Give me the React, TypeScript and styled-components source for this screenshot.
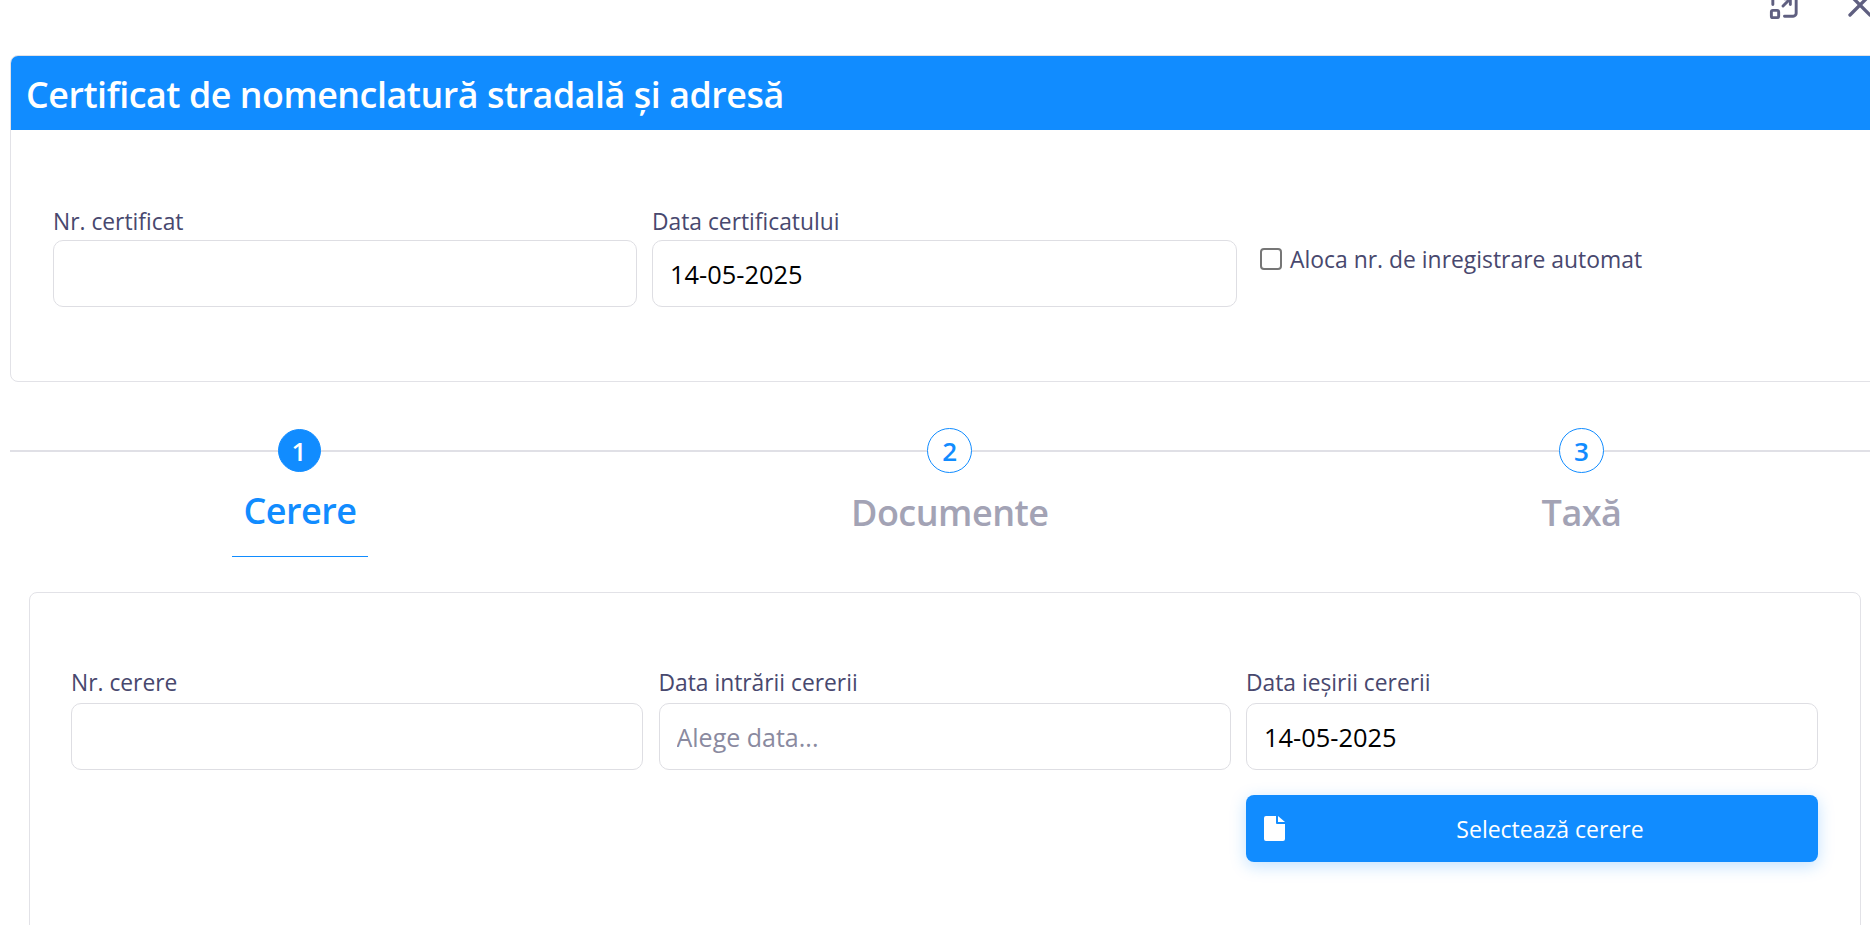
import { createGlobalStyle, styled } from "styled-components";
import { TbWindowMaximize, TbX } from "react-icons/tb";

const GlobalStyle = createGlobalStyle`
  html, body {
    margin: 0;
    padding: 0;
    background: #fff;
    overflow: hidden;
    font-family: "Open Sans", "Noto Sans", sans-serif;
  }
  * { box-sizing: border-box; }
`;

const Page = styled.div`
  width: 1870px;
  height: 925px;
  overflow: hidden;
`;

const Toolbar = styled.div`
  height: 9px;
  margin-bottom: 46px;
  display: flex;
  align-items: center;
  justify-content: flex-end;
  gap: 38px;
  color: #5f5f80;
`;

const CloseIcon = styled(TbX)`
  margin-right: -10px;
`;

const TopCard = styled.section`
  width: 1880px;
  margin-left: 10px;
  border: 1px solid #e2e2e7;
  border-radius: 8px;
  overflow: hidden;
`;

const Header = styled.header`
  height: 75px;
  margin: -1px 0 0 -1px;
  padding: 3px 0 0 16px;
  display: flex;
  align-items: center;
  background: #118cff;
`;

const Title = styled.h1`
  margin: 0;
  color: #fff;
  font-size: 35.8px;
  font-weight: 600;
  letter-spacing: -0.45px;
`;

const Field = styled.div`
  display: flex;
  flex-direction: column;
`;

const Label = styled.label`
  height: 35px;
  line-height: 30px;
  color: #48486e;
  font-size: 22.8px;
`;

const TopBody = styled.div`
  padding: 75px 0 74px 42px;
  display: grid;
  grid-template-columns: 584px 585px auto;
  column-gap: 15px;
  align-items: start;

  ${Label} {
    line-height: 33px;
  }
`;

const TextInput = styled.input`
  width: 100%;
  height: 67px;
  padding: 0 17px;
  border: 1px solid #dedee3;
  border-radius: 10px;
  outline: none;
  background: #fff;
  color: #000;
  font-family: inherit;
  font-size: 25.4px;

  &::placeholder {
    color: #8a8aa0;
    opacity: 1;
    font-size: 25px;
  }
`;

const AutoAllocate = styled.label`
  margin: 41px 0 0 8px;
  display: flex;
  align-items: center;
  gap: 8px;
  color: #48486e;
  font-size: 22.9px;
  line-height: 22px;
`;

const AutoAllocateText = styled.span`
  padding-top: 3px;
`;

const Checkbox = styled.input`
  width: 22px;
  height: 22px;
  margin: 0;
  appearance: none;
  border: 2px solid #767676;
  border-radius: 4px;
  background: #fff;
`;

const Stepper = styled.nav`
  position: relative;
  height: 129px;
  margin: 46px 0 0 10px;
  padding-left: 222px;
  display: flex;
  align-items: flex-start;

  &::before {
    content: "";
    position: absolute;
    top: 22px;
    left: 0;
    right: 0;
    height: 2px;
    background: #e0e0e6;
  }
`;

const Step = styled.div<{ $active?: boolean; $offset?: number }>`
  position: relative;
  width: ${({ $active }) => ($active ? "136px" : "auto")};
  height: 129px;
  margin-left: ${({ $offset }) => $offset ?? 0}px;
  display: flex;
  flex-direction: column;
  align-items: center;
  border-bottom: ${({ $active }) => ($active ? "1px solid #118cff" : "none")};
`;

const StepNumber = styled.div<{ $active?: boolean }>`
  width: ${({ $active }) => ($active ? "43px" : "45px")};
  height: ${({ $active }) => ($active ? "43px" : "45px")};
  margin: ${({ $active }) => ($active ? "1px 2px 0 0" : "0")};
  display: flex;
  align-items: center;
  justify-content: center;
  border: 1px solid #118cff;
  border-radius: 50%;
  background: ${({ $active }) => ($active ? "#118cff" : "#fff")};
  color: ${({ $active }) => ($active ? "#fff" : "#118cff")};
  font-size: 26px;
  font-weight: 600;
`;

const StepName = styled.div<{ $active?: boolean }>`
  margin-top: ${({ $active }) => ($active ? "14px" : "15px")};
  line-height: 50px;
  color: ${({ $active }) => ($active ? "#118cff" : "#a3a3b5")};
  font-size: 36px;
  font-weight: 600;
  letter-spacing: -0.5px;
`;

const RequestCard = styled.section`
  width: 1832px;
  min-height: 400px;
  margin: 35px 0 0 29px;
  padding: 75px 0 0 41px;
  border: 1px solid #e2e2e7;
  border-radius: 8px;
  display: grid;
  grid-template-columns: 572px 572px 572px;
  column-gap: 15.5px;
  align-content: start;
`;

const SelectButton = styled.button`
  grid-column: 3;
  height: 67px;
  margin-top: 25px;
  padding: 0 3px 0 18px;
  border: none;
  border-radius: 8px;
  display: grid;
  grid-template-columns: auto 1fr;
  align-items: center;
  background: #118cff;
  box-shadow: 0 4px 16px rgba(17, 140, 255, 0.25);
  color: #fff;
  font-family: inherit;
  font-size: 23px;
`;

const FileIcon = styled.svg`
  width: 21px;
  height: 25px;
  fill: #fff;
`;

export default function App() {
  return (
    <Page>
      <GlobalStyle />
      <Toolbar>
        <TbWindowMaximize size={35} />
        <CloseIcon size={40} />
      </Toolbar>

      <TopCard>
        <Header>
          <Title>Certificat de nomenclatură stradală și adresă</Title>
        </Header>
        <TopBody>
          <Field>
            <Label>Nr. certificat</Label>
            <TextInput readOnly />
          </Field>
          <Field>
            <Label>Data certificatului</Label>
            <TextInput readOnly value="14-05-2025" />
          </Field>
          <AutoAllocate>
            <Checkbox type="checkbox" />
            <AutoAllocateText>Aloca nr. de inregistrare automat</AutoAllocateText>
          </AutoAllocate>
        </TopBody>
      </TopCard>

      <Stepper>
        <Step $active>
          <StepNumber $active>1</StepNumber>
          <StepName $active>Cerere</StepName>
        </Step>
        <Step $offset={483}>
          <StepNumber>2</StepNumber>
          <StepName>Documente</StepName>
        </Step>
        <Step $offset={493}>
          <StepNumber>3</StepNumber>
          <StepName>Taxă</StepName>
        </Step>
      </Stepper>

      <RequestCard>
        <Field>
          <Label>Nr. cerere</Label>
          <TextInput readOnly />
        </Field>
        <Field>
          <Label>Data intrării cererii</Label>
          <TextInput readOnly placeholder="Alege data..." />
        </Field>
        <Field>
          <Label>Data ieșirii cererii</Label>
          <TextInput readOnly value="14-05-2025" />
        </Field>
        <SelectButton>
          <FileIcon viewBox="0 0 21 25">
            <path d="M2 0h10v7a1 1 0 0 0 1 1h8v15a2 2 0 0 1-2 2H2a2 2 0 0 1-2-2V2a2 2 0 0 1 2-2z" />
            <path d="M14 0l7 6h-7z" />
          </FileIcon>
          <span>Selectează cerere</span>
        </SelectButton>
      </RequestCard>
    </Page>
  );
}
